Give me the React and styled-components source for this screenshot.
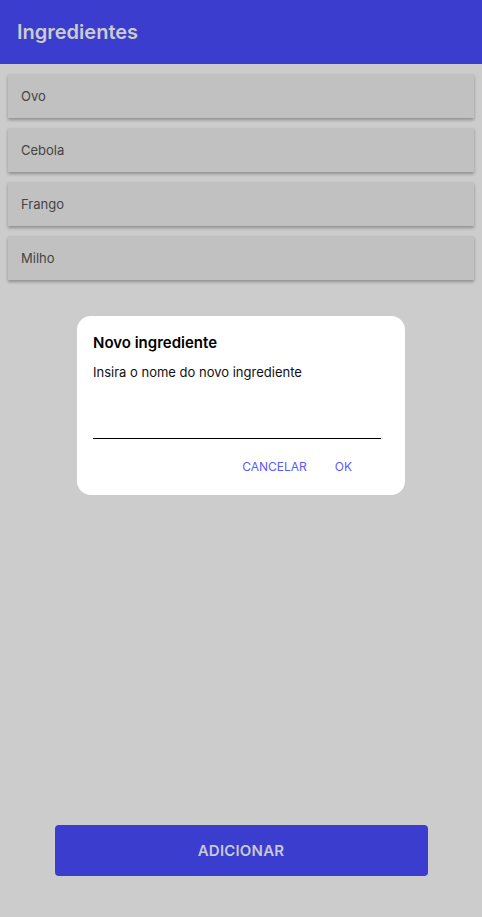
import React from 'react';
import styled, { createGlobalStyle } from 'styled-components';

const ingredients = ['Ovo', 'Cebola', 'Frango', 'Milho'];

const App = () => {
  return (
    <>
      <GlobalStyle />
      <Page>
        <Header>
          <Title>Ingredientes</Title>
        </Header>

        <List>
          {ingredients.map((name) => (
            <Card key={name}>{name}</Card>
          ))}
        </List>

        <Footer>
          <AddButton>ADICIONAR</AddButton>
        </Footer>
      </Page>

      <Overlay>
        <Dialog>
          <DialogTitle>Novo ingrediente</DialogTitle>
          <DialogText>Insira o nome do novo ingrediente</DialogText>
          <Input type="text" />
          <Actions>
            <TextButton>CANCELAR</TextButton>
            <TextButton>OK</TextButton>
          </Actions>
        </Dialog>
      </Overlay>
    </>
  );
};

export default App;

// style
const GlobalStyle = createGlobalStyle`
  html, body {
    margin: 0;
    padding: 0;
    background: #cccccc;
    font-family: Inter, "Noto Sans", sans-serif;
  }
`;

const Page = styled.div`
  display: flex;
  flex-direction: column;
  min-height: 917px;
  background: #cccccc;
`;

const Header = styled.header`
  height: 64px;
  display: flex;
  align-items: center;
  padding: 0 17px;
  background: #3a3dce;
`;

const Title = styled.h1`
  margin: 0;
  font-size: 20px;
  font-weight: 600;
  color: #cccccc;
`;

const List = styled.div`
  display: flex;
  flex-direction: column;
  gap: 10px;
  padding: 10px 8px 0;
`;

const Card = styled.div`
  height: 44px;
  display: flex;
  align-items: center;
  padding: 0 13px;
  background: #c1c1c1;
  box-shadow: 0 2px 3px rgba(0, 0, 0, 0.3);
  font-size: 13px;
  color: #444444;
`;

const Footer = styled.div`
  margin-top: auto;
  display: flex;
  justify-content: center;
  padding-bottom: 41px;
`;

const AddButton = styled.button`
  width: 373px;
  height: 51px;
  border: none;
  border-radius: 4px;
  background: #3a3dce;
  color: #c8c8d8;
  font-family: Inter, "Noto Sans", sans-serif;
  font-size: 15px;
  font-weight: 600;
  letter-spacing: 0.2px;
`;

const Overlay = styled.div`
  position: fixed;
  inset: 0;
  display: flex;
  justify-content: center;
  align-items: flex-start;
  padding-top: 316px;
`;

const Dialog = styled.div`
  width: 328px;
  box-sizing: border-box;
  padding: 17px 24px 21px 16px;
  background: #ffffff;
  border-radius: 14px;
  display: flex;
  flex-direction: column;
`;

const DialogTitle = styled.h2`
  margin: 0;
  font-size: 15px;
  font-weight: 600;
  color: #000000;
  line-height: 20px;
`;

const DialogText = styled.p`
  margin: 10px 0 0;
  font-size: 13px;
  color: #111111;
  line-height: 18px;
`;

const Input = styled.input`
  margin-top: 33px;
  height: 24px;
  border: none;
  border-bottom: 1px solid #000000;
  outline: none;
  background: transparent;
  padding: 0;
`;

const Actions = styled.div`
  display: flex;
  justify-content: flex-end;
  gap: 28px;
  margin-top: 20px;
  padding-right: 29px;
`;

const TextButton = styled.button`
  border: none;
  background: none;
  padding: 0;
  font-family: Inter, "Noto Sans", sans-serif;
  font-size: 12px;
  color: #5a5aff;
`;
